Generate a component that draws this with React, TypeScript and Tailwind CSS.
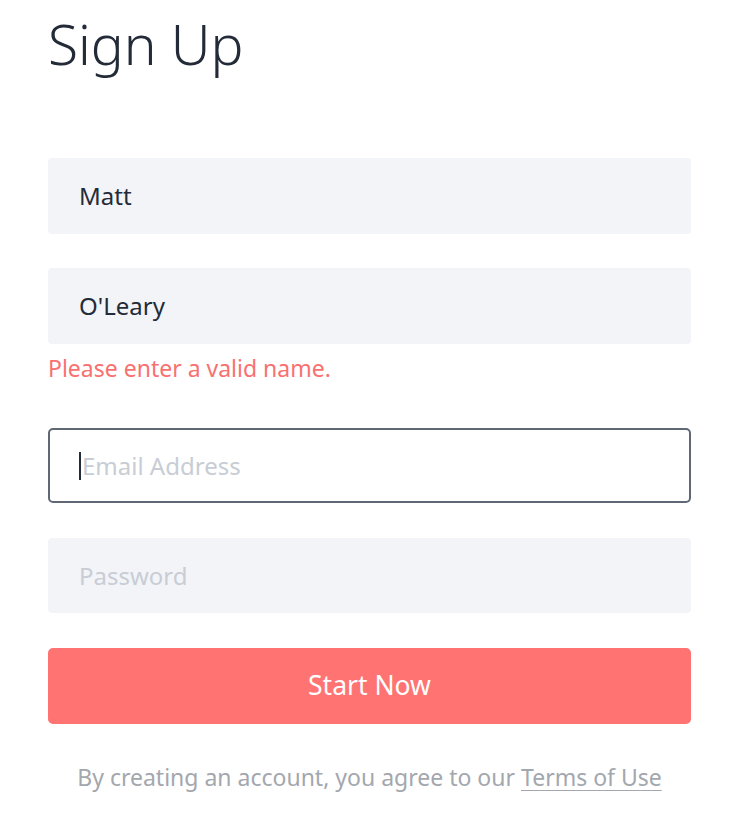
export default function App() {
  return (
    <div
      className="min-h-screen bg-white pl-[48px] pr-[55px] text-[#232b38]"
      style={{ fontFamily: "'Noto Sans', Lato, sans-serif" }}
    >
      <h1 className="pt-[14px] text-[55px] leading-[60px] font-light">Sign Up</h1>

      <form className="mt-[84px] flex flex-col">
        <div className="flex h-[76px] items-center rounded-[4px] bg-[#f3f4f8] pl-[31px] text-[24px]">
          Matt
        </div>

        <div className="mt-[34px] flex h-[76px] items-center rounded-[4px] bg-[#f3f4f8] pl-[31px] text-[24px]">
          O'Leary
        </div>
        <p className="mt-[10px] text-[23px] leading-[28px] text-[#f87171]">
          Please enter a valid name.
        </p>

        <div className="mt-[46px] flex h-[75px] items-center rounded-[5px] border-2 border-[#5f6874] pl-[29px] text-[24px] text-[#c8cdd5]">
          <span className="mr-[1px] h-[28px] w-[2px] bg-[#232b38]" />
          Email Address
        </div>

        <div className="mt-[35px] flex h-[75px] items-center rounded-[4px] bg-[#f3f4f8] pl-[31px] text-[24px] text-[#c8cdd5]">
          Password
        </div>

        <button
          type="button"
          className="mt-[35px] h-[76px] rounded-[5px] bg-[#ff7472] text-[26.5px] text-white"
        >
          Start Now
        </button>

        <p className="mt-[38px] text-center text-[23px] leading-[30px] text-[#a3a7ae]">
          By creating an account, you agree to our{" "}
          <a className="underline underline-offset-[4px] decoration-1">Terms of Use</a>
        </p>
      </form>
    </div>
  );
}
